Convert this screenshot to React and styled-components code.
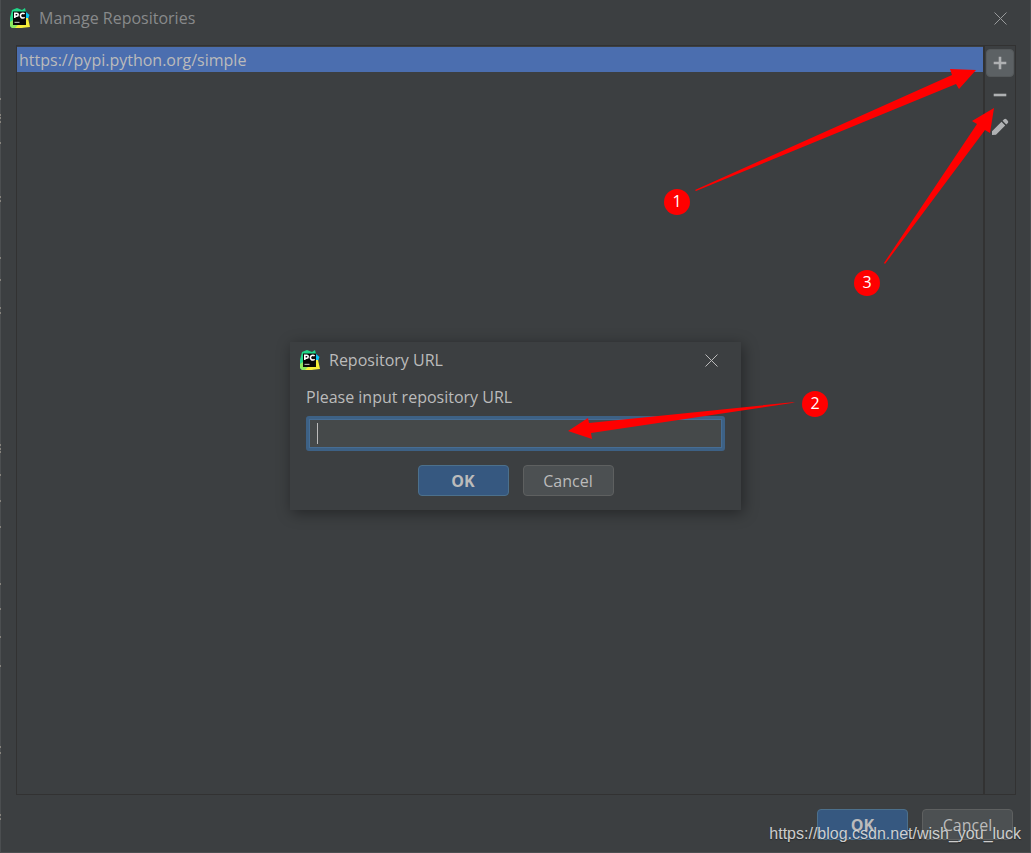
import React, { useState } from "react";
import styled, { createGlobalStyle } from "styled-components";

const GlobalStyle = createGlobalStyle`
  * {
    box-sizing: border-box;
  }

  body {
    margin: 0;
    background: #3c3f41;
    color: #bbbbbb;
    font-family: "Open Sans", "Noto Sans", sans-serif;
    font-size: 16px;
    line-height: 22px;
  }

  button,
  input {
    font: inherit;
    color: inherit;
  }
`;

const Window = styled.main`
  position: relative;
  min-height: 100vh;
  display: flex;
  flex-direction: column;
  border: 1px solid #4b4e50;
  border-top: 0;
  overflow: hidden;
`;

/* bits of the editor showing past the left edge of the window */
const Edge = styled.svg`
  position: absolute;
  left: 0;
  top: 0;
  width: 1px;
  height: 100%;
`;

const TitleBar = styled.header`
  display: flex;
  align-items: center;
  gap: 9px;
  height: 36px;
  padding: 0 23px 0 ${(props) => (props.$active ? 9 : 8)}px;
  color: ${(props) => (props.$active ? "#bbbbbb" : "#888a8b")};
`;

const Title = styled.h1`
  flex: 1;
  margin: 0;
  font-size: 16px;
  font-weight: 400;
`;

const CloseButton = styled.button`
  display: flex;
  padding: 0;
  border: 0;
  background: none;
  color: ${(props) => (props.$active ? "#bbbbbb" : "#999b9c")};
`;

const Panel = styled.section`
  flex: 1;
  display: flex;
  margin: 9px 14px 0 15px;
  border: 1px solid #323232;
`;

const List = styled.ul`
  flex: 1;
  margin: 0;
  padding: 1px 0 0;
  list-style: none;
`;

const ListItem = styled.li`
  height: 25px;
  padding: 0 2px;
  line-height: 26px;
  background: ${(props) => (props.$selected ? "#4b6eaf" : "transparent")};
`;

const Tools = styled.div`
  display: flex;
  flex-direction: column;
  gap: 4px;
  padding: 3px 1px;
  border-left: 2px solid #323232;
`;

const ToolButton = styled.button`
  display: flex;
  align-items: center;
  justify-content: center;
  width: 28px;
  height: 28px;
  padding: 0;
  border: 1px solid ${(props) => (props.$hovered ? "#55595b" : "transparent")};
  border-radius: 4px;
  background: ${(props) => (props.$hovered ? "#5c6164" : "transparent")};
  color: #afb1b3;
`;

const Actions = styled.footer`
  display: flex;
  justify-content: ${(props) => props.$align};
  gap: 14px;
  padding: 14px 17px ${(props) => (props.$align === "center" ? 14 : 12)}px;
`;

const Button = styled.button`
  width: 91px;
  height: 31px;
  padding: 0;
  border: 1px solid ${(props) => (props.$primary ? "#4c708c" : "#5e6060")};
  border-radius: 4px;
  background: ${(props) => (props.$primary ? "#365880" : "#4c5052")};
  font-weight: ${(props) => (props.$primary ? 700 : 400)};
`;

const Backdrop = styled.div`
  position: absolute;
  inset: 0;
  display: flex;
  align-items: center;
  justify-content: center;
`;

const Dialog = styled.form`
  width: 451px;
  background: #3c3f41;
  box-shadow: 2px 3px 14px rgba(0, 0, 0, 0.4);
`;

const Field = styled.div`
  display: flex;
  flex-direction: column;
  gap: 8px;
  padding: 8px 16px 0;
`;

const InputWrap = styled.div`
  position: relative;
  display: flex;
`;

const Input = styled.input`
  width: 100%;
  height: 35px;
  padding: 0 8px;
  border: 3px solid #3d6185;
  border-radius: 3px;
  background: #45494a;
  box-shadow: inset 0 0 0 1px #466d94;
  outline: none;
  caret-color: transparent;
`;

const Caret = styled.span`
  position: absolute;
  left: 11px;
  top: 7px;
  width: 1px;
  height: 21px;
  background: #bbbbbb;
`;

const Arrows = styled.svg`
  position: absolute;
  left: -1px;
  top: 0;
  width: 1031px;
  height: 853px;
  fill: #ff0000;
  pointer-events: none;
`;

const Badge = styled.span`
  position: absolute;
  left: ${(props) => props.$x}px;
  top: ${(props) => props.$y}px;
  width: 26px;
  height: 26px;
  border-radius: 50%;
  background: #ff0000;
  color: #ffffff;
  line-height: 24px;
  text-align: center;
`;

const Watermark = styled.span`
  position: absolute;
  right: 9px;
  bottom: 7px;
  color: rgba(225, 225, 225, 0.9);
  font-family: "Liberation Sans", Arial, sans-serif;
  text-shadow: 0 1px 1px rgba(0, 0, 0, 0.4);
`;

const repositories = ["https://pypi.python.org/simple"];

const badges = [
  { label: "1", x: 663, y: 189 },
  { label: "2", x: 801, y: 391 },
  { label: "3", x: 853, y: 270 },
];

const specks = [98, 114, 117, 121, 142, 196, 200, 257, 279, 307, 312, 444, 448, 451, 474, 500, 526, 583, 608, 636, 665, 746, 752, 814, 818];

const AppIcon = () => (
  <svg width="21" height="22" viewBox="0 0 21 22" aria-hidden="true">
    <path d="M3 3 8 1l5 2 3-2 1 4v12l-4 4H3l-2-2 0-8Z" fill="#21d789" />
    <path d="m1 15 3-2v5h9v3H3l-2-2Z" fill="#8be85f" />
    <path d="M17 5 20.500 8l-1.500 4-2 1Z" fill="#07c3f2" />
    <path d="M16 11h3l2 9-9 1H6l4-4h6Z" fill="#f6ee3a" />
    <path d="M4 4.500h13v13.500H4z" fill="#080808" />
    <path
      d="M5.800 11V6.200h1.900a1.500 1.500 0 0 1 0 3H5.800M15.600 7a2.400 2.400 0 1 0 0 3.200"
      fill="none"
      stroke="#fff"
      strokeWidth="1.600"
    />
    <path d="M5.500 14.800h5v1.200h-5z" fill="#a8a8a8" />
  </svg>
);

const CloseIcon = () => (
  <svg width="13" height="13" viewBox="0 0 13 13" fill="none" stroke="currentColor" aria-hidden="true">
    <path d="m.5.5 12 12m0-12-12 12" />
  </svg>
);

const App = () => {
  const [url, setUrl] = useState("");
  return (
    <>
      <GlobalStyle />
      <Window>
        <TitleBar>
          <AppIcon />
          <Title>Manage Repositories</Title>
          <CloseButton type="button" aria-label="Close">
            <CloseIcon />
          </CloseButton>
        </TitleBar>
        <Panel>
          <List>
            {repositories.map((item) => (
              <ListItem key={item} $selected>
                {item}
              </ListItem>
            ))}
          </List>
          <Tools>
            <ToolButton type="button" aria-label="Add" $hovered>
              <svg width="14" height="14" viewBox="0 0 14 14" fill="currentColor">
                <path d="M5.700.7h2.600v5h5v2.600h-5v5H5.700v-5h-5V5.700h5z" />
              </svg>
            </ToolButton>
            <ToolButton type="button" aria-label="Remove">
              <svg width="14" height="14" viewBox="0 0 14 14" fill="currentColor">
                <path d="M.7 5.700h12.600v2.600H.7z" />
              </svg>
            </ToolButton>
            <ToolButton type="button" aria-label="Edit">
              <svg width="18" height="18" viewBox="0 0 18 18" fill="currentColor">
                <path d="M10.5 3.8 14.2 7.5 5 16.8l-4 .2.0-3.800ZM11.6 2.7l1.5-1.5q1.2-.8 2.3.1l1.5 1.6q.8 1.1 0 2.1l-1.6 1.5Z" />
              </svg>
            </ToolButton>
          </Tools>
        </Panel>
        <Actions $align="flex-end">
          <Button type="button" $primary>
            OK
          </Button>
          <Button type="button">Cancel</Button>
        </Actions>

        <Backdrop>
          <Dialog onSubmit={(e) => e.preventDefault()}>
            <TitleBar as="div" $active>
              <AppIcon />
              <Title as="h2">Repository URL</Title>
              <CloseButton type="button" aria-label="Close" $active>
                <CloseIcon />
              </CloseButton>
            </TitleBar>
            <Field>
              <label htmlFor="url">Please input repository URL</label>
              <InputWrap>
                <Input id="url" value={url} onChange={(e) => setUrl(e.target.value)} />
                {url === "" && <Caret />}
              </InputWrap>
            </Field>
            <Actions as="div" $align="center">
              <Button type="submit" $primary>
                OK
              </Button>
              <Button type="button">Cancel</Button>
            </Actions>
          </Dialog>
        </Backdrop>

        <Arrows viewBox="0 0 1031 853" aria-hidden="true">
          <path d="m695 190 257-115-2-6 26 1-17 19-3-5L696 191Z" />
          <path d="m795 402-206 21-1-5-20 13 24 8-1-6 201-30Z" />
          <path d="M884 263 977 124l-5-3 22-13-4 25-5-3L885 264Z" />
        </Arrows>
        {badges.map((badge) => (
          <Badge key={badge.label} $x={badge.x} $y={badge.y}>
            {badge.label}
          </Badge>
        ))}
        <Watermark>https://blog.csdn.net/wish_you_luck</Watermark>
      </Window>
      <Edge aria-hidden="true">
        {specks.map((y) => (
          <rect key={y} y={y} width="1" height="2" fill="#85827c" />
        ))}
      </Edge>
    </>
  );
};

export default App;
